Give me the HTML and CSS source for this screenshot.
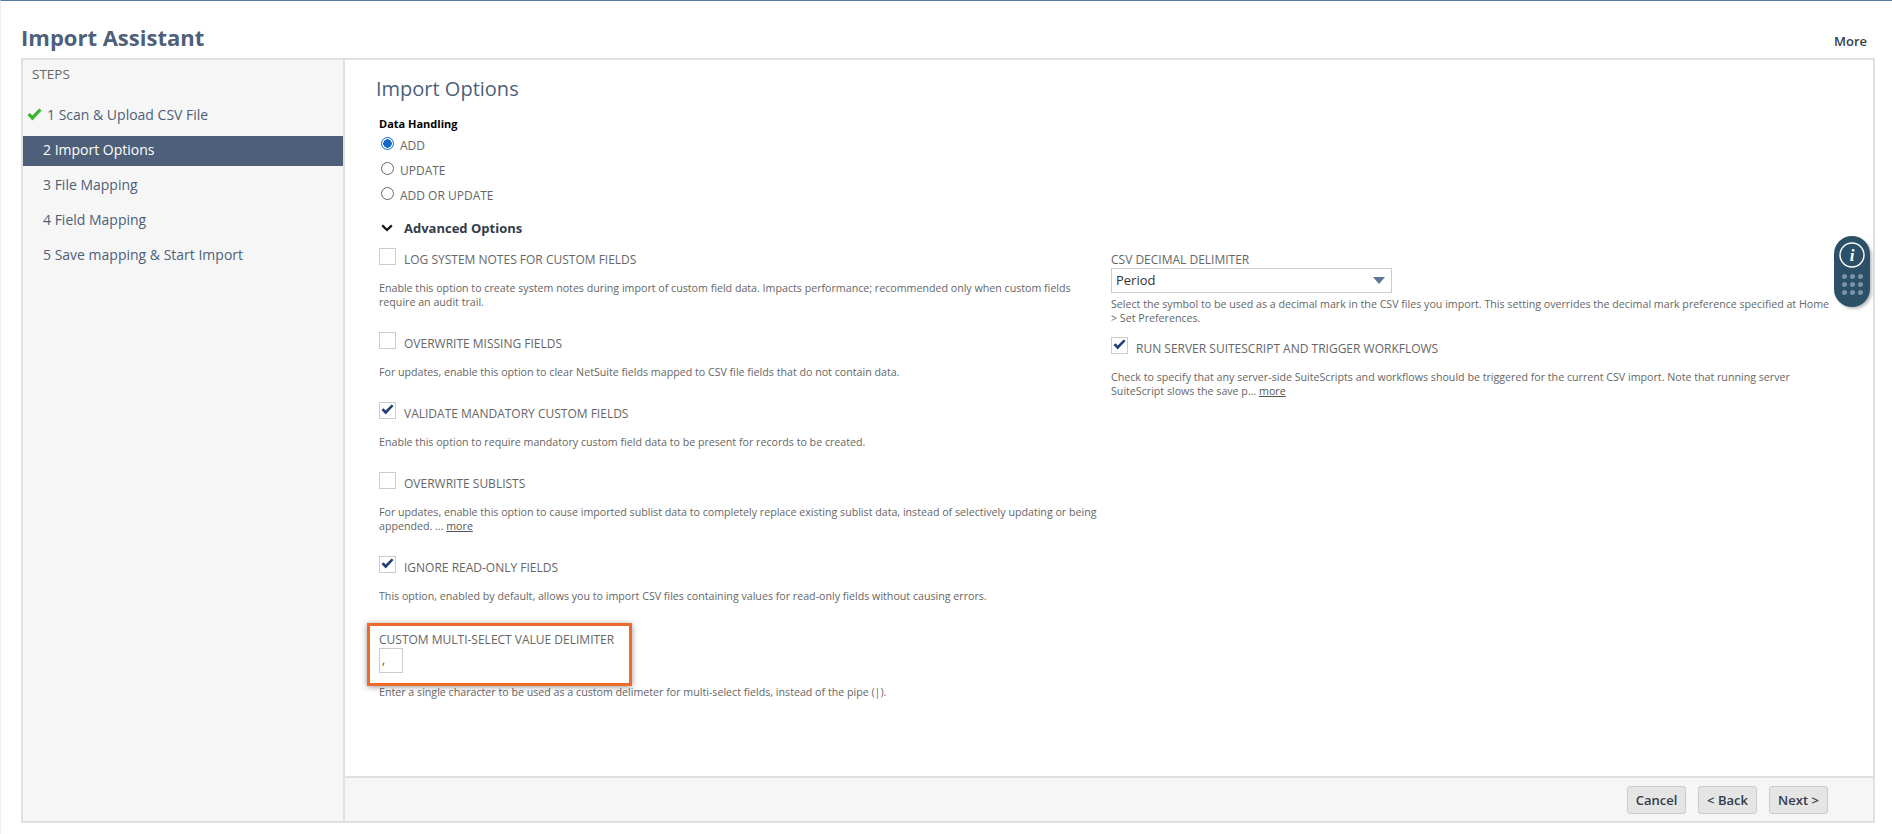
FILE: index.html
```html
<!DOCTYPE html>
<html lang="en">
<head>
<meta charset="utf-8">
<title>Import Assistant</title>
<link rel="stylesheet" href="styles.css">
</head>
<body>
<div class="page">
  <header class="head">
    <h1>Import Assistant</h1>
    <a class="more-link">More</a>
  </header>
  <div class="frame">
    <aside class="side">
      <div class="steps-title">STEPS</div>
      <ul class="steps">
        <li class="step done"><svg class="tick" viewBox="0 0 14 12" width="15" height="13"><path d="M0.5 6.5 L2.6 4.6 L5 7 L11.5 0.5 L13.6 2.3 L5 11.5 Z" fill="#38b52a"/></svg>1 Scan &amp; Upload CSV File</li>
        <li class="step active">2 Import Options</li>
        <li class="step">3 File Mapping</li>
        <li class="step">4 Field Mapping</li>
        <li class="step">5 Save mapping &amp; Start Import</li>
      </ul>
    </aside>
    <main class="main">
      <div class="body">
        <h2>Import Options</h2>
        <div class="dh-title">Data Handling</div>
        <div class="radio"><span class="dot on"></span>ADD</div>
        <div class="radio"><span class="dot"></span>UPDATE</div>
        <div class="radio"><span class="dot"></span>ADD OR UPDATE</div>
        <div class="adv"><svg class="chev" viewBox="0 0 12 8" width="12" height="8"><path d="M1.2 1.4 L6 6 L10.8 1.4" fill="none" stroke="#111" stroke-width="2.2"/></svg>Advanced Options</div>
        <div class="cols">
          <div class="col">
            <div class="opt h84">
              <div class="chk-row"><span class="box"></span>LOG SYSTEM NOTES FOR CUSTOM FIELDS</div>
              <p class="desc">Enable this option to create system notes during import of custom field data. Impacts performance; recommended only when custom fields require an audit trail.</p>
            </div>
            <div class="opt h70">
              <div class="chk-row"><span class="box"></span>OVERWRITE MISSING FIELDS</div>
              <p class="desc">For updates, enable this option to clear NetSuite fields mapped to CSV file fields that do not contain data.</p>
            </div>
            <div class="opt h70">
              <div class="chk-row"><span class="box"><svg class="check" viewBox="0 0 14 12" width="13" height="11"><path d="M0.5 6.5 L2.6 4.6 L5 7 L11.5 0.5 L13.6 2.3 L5 11.5 Z" fill="#1f3f78"/></svg></span>VALIDATE MANDATORY CUSTOM FIELDS</div>
              <p class="desc">Enable this option to require mandatory custom field data to be present for records to be created.</p>
            </div>
            <div class="opt h84">
              <div class="chk-row"><span class="box"></span>OVERWRITE SUBLISTS</div>
              <p class="desc">For updates, enable this option to cause imported sublist data to completely replace existing sublist data, instead of selectively updating or being appended. ... <u>more</u></p>
            </div>
            <div class="opt h70">
              <div class="chk-row"><span class="box"><svg class="check" viewBox="0 0 14 12" width="13" height="11"><path d="M0.5 6.5 L2.6 4.6 L5 7 L11.5 0.5 L13.6 2.3 L5 11.5 Z" fill="#1f3f78"/></svg></span>IGNORE READ-ONLY FIELDS</div>
              <p class="desc">This option, enabled by default, allows you to import CSV files containing values for read-only fields without causing errors.</p>
            </div>
            <div class="delim">
              <div class="field-label">CUSTOM MULTI-SELECT VALUE DELIMITER</div>
              <div class="mini-input">,</div>
              <p class="desc delim-desc">Enter a single character to be used as a custom delimeter for multi-select fields, instead of the pipe (|).</p>
              <div class="highlight"></div>
            </div>
          </div>
          <div class="col right">
            <div class="field-label">CSV DECIMAL DELIMITER</div>
            <div class="select">Period<span class="caret"></span></div>
            <p class="desc sel-desc">Select the symbol to be used as a decimal mark in the CSV files you import. This setting overrides the decimal mark preference specified at Home &gt; Set Preferences.</p>
            <div class="opt">
              <div class="chk-row"><span class="box"><svg class="check" viewBox="0 0 14 12" width="13" height="11"><path d="M0.5 6.5 L2.6 4.6 L5 7 L11.5 0.5 L13.6 2.3 L5 11.5 Z" fill="#1f3f78"/></svg></span>RUN SERVER SUITESCRIPT AND TRIGGER WORKFLOWS</div>
              <p class="desc">Check to specify that any server-side SuiteScripts and workflows should be triggered for the current CSV import. Note that running server SuiteScript slows the save p... <u>more</u></p>
            </div>
          </div>
        </div>
      </div>
      <footer class="foot">
        <button class="btn">Cancel</button>
        <button class="btn">&lt; Back</button>
        <button class="btn">Next &gt;</button>
      </footer>
    </main>
  </div>
  <div class="pill">
    <svg class="info" viewBox="0 0 26 26" width="26" height="26"><circle cx="13" cy="13" r="12" fill="none" stroke="#fff" stroke-width="1.4"/><text x="13" y="19" text-anchor="middle" class="info-i">i</text></svg>
    <div class="dots"><i></i><i></i><i></i><i></i><i></i><i></i><i></i><i></i><i></i></div>
  </div>
</div>
</body>
</html>
```
FILE: styles.css
```css
* { box-sizing: border-box; }
html, body { margin: 0; padding: 0; height: 100%; }
body { font-family: "Open Sans", "Noto Sans", sans-serif; color: #666; background: #fff; overflow: hidden; }
.page { position: relative; height: 834px; border-top: 1px solid #5b7a9f; padding: 0 17px 11px 20px; display: flex; flex-direction: column; border-left: 1px solid #eee; }
.head { height: 57px; display: flex; justify-content: space-between; align-items: flex-start; }
.head h1 { margin: 20px 0 0 0; font-size: 22px; line-height: 32px; font-weight: 700; color: #4d5f79; }
.more-link { margin: 30px 0 0 0; padding-right: 8px; font-size: 13px; line-height: 20px; font-weight: 600; color: #333c4a; }
.frame { flex: 1; display: flex; border: 2px solid #e0e0e0; min-height: 0; }
.side { width: 322px; background: #f6f6f6; border-right: 2px solid #e0e0e0; flex: none; }
.steps-title { font-size: 13.5px; line-height: 18px; padding: 5px 0 0 9px; height: 41px; color: #666; }
.steps { list-style: none; margin: 0; padding: 0; }
.step { height: 35px; padding: 0 0 9px 20px; font-size: 14px; color: #4d5f79; display: flex; align-items: center; white-space: pre; }
.step.done { padding-left: 4px; }
.tick { margin-right: 5px; }
.step.active { background: #4d5f79; color: #fff; height: 30px; padding-bottom: 4px; margin-bottom: 5px; }
.main { flex: 1; display: flex; flex-direction: column; min-width: 0; }
.body { flex: 1; padding: 14px 0 0 32px; }
.body h2 { margin: 0 0 0 -1px; font-size: 20px; line-height: 29px; font-weight: 400; color: #4d5f79; }
.dh-title { margin: 13px 0 1px 2px; font-size: 11px; line-height: 16px; font-weight: 700; color: #000; }
.radio { display: flex; align-items: center; height: 25px; font-size: 12px; color: #666; padding-left: 4px; }
.dot { width: 13px; height: 13px; border: 1px solid #666; border-radius: 50%; margin-right: 6px; margin-top: -4px; background: #fff; flex: none; }
.dot.on { border: 1px solid #1467c8; background: radial-gradient(circle, #1467c8 0 4px, #fff 4.5px); }
.adv { display: flex; align-items: center; margin: 8px 0 0 4px; height: 24px; font-size: 13px; font-weight: 700; color: #333c4a; }
.chev { margin-right: 11px; }
.cols { display: flex; margin-top: 8px; }
.col { width: 734px; padding: 0 0 0 2px; flex: none; position: relative; }
.col.right { width: 720px; padding: 4px 0 0; }
.opt { display: block; }
.h84 { height: 84px; }
.h70 { height: 70px; }
.chk-row { display: flex; align-items: flex-end; height: 19px; font-size: 12px; line-height: 15px; color: #666; }
.box { width: 17px; height: 17px; border: 1px solid #ccc; background: #fff; margin-right: 8px; margin-bottom: 2px; flex: none; position: relative; display: flex; align-items: center; justify-content: center; }
.check { margin-top: -3px; }
.desc { margin: 14px 0 0 0; width: 725px; font-size: 10.67px; line-height: 14px; color: #666; }
.desc u { color: #555; }
.delim { position: relative; margin-top: 6px; }
.field-label { font-size: 12px; line-height: 15px; color: #666; }
.mini-input { width: 24px; height: 25px; border: 1px solid #ccc; margin-top: 1px; font-size: 12px; line-height: 21px; padding-left: 2px; color: #444; }
.delim-desc { margin-top: 12px; }
.highlight { position: absolute; left: -12px; top: -9px; width: 265px; height: 63px; border: 3px solid #ee6a2c; box-shadow: 0 1px 6px rgba(0,0,0,.4); pointer-events: none; }
.select { width: 281px; height: 25px; border: 1px solid #ccc; font-size: 13px; line-height: 23px; padding-left: 4px; color: #333; margin-top: 1px; position: relative; }
.caret { position: absolute; right: 6px; top: 8px; width: 0; height: 0; border-left: 6px solid transparent; border-right: 6px solid transparent; border-top: 7px solid #5e7697; }
.sel-desc { margin: 4px 0 12px 0; }
.right .desc { width: 720px; }
.foot { height: 45px; background: #f6f6f6; border-top: 2px solid #e0e0e0; display: flex; justify-content: flex-end; align-items: center; gap: 12px; padding: 0 45px 0 0; }
.btn { width: 59px; height: 28px; background: #e5e5e5; border: 1px solid #ccc; border-radius: 3px; font-family: inherit; font-size: 13px; font-weight: 600; color: #333c4a; padding: 0; }
.pill { position: absolute; left: 1833px; top: 235px; width: 36px; height: 71px; border-radius: 18px; background: #2b5068; box-shadow: 2px 2px 3px rgba(0,0,0,.25); display: flex; flex-direction: column; align-items: center; padding-top: 6px; }
.info-i { font-family: "Liberation Serif", serif; font-style: italic; font-weight: 700; font-size: 17px; fill: #fff; }
.dots { display: grid; grid-template-columns: repeat(3, 5px); gap: 3px; margin-top: 6px; }
.dots i { width: 5px; height: 5px; border-radius: 50%; background: #7c95a6; display: block; }
```
